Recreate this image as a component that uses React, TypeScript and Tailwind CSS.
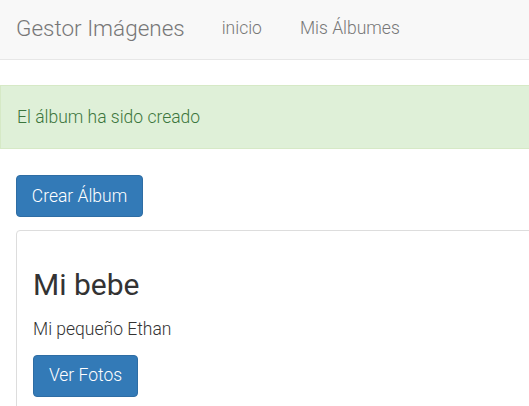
export default function App() {
  return (
    <div className="w-[529px] h-[406px] overflow-hidden bg-white" style={{ fontFamily: "Roboto, 'Noto Sans', sans-serif" }}>
      <div className="w-[700px]">
        <nav className="h-[60px] pb-[2px] bg-[#f8f8f8] border-b border-[#e7e7e7] flex items-center">
          <span className="ml-[16px] text-[22.5px] text-[#777] font-light leading-none">Gestor Imágenes</span>
          <span className="ml-[37px] text-[17.5px] text-[#777] font-light leading-none">inicio</span>
          <span className="ml-[38px] text-[17.5px] text-[#777] font-light leading-none">Mis Álbumes</span>
        </nav>
        <div className="mt-[25px] h-[64px] bg-[#dff0d8] border border-[#d6e9c6] flex items-center pl-[16px] text-[17.5px] font-light text-[#3c763d]">
          El álbum ha sido creado
        </div>
        <div className="pl-[16px]">
          <button className="mt-[26px] h-[42px] w-[127px] rounded-[4px] bg-[#337ab7] border border-[#2e6da4] text-white text-[17.5px] font-light flex items-center justify-center">
            Crear Álbum
          </button>
          <div className="mt-[13px] border border-[#ddd] rounded-[4px] pl-[16px] pt-[39px] pb-[20px]">
            <h3 className="text-[30px] leading-none text-[#333] font-normal">Mi bebe</h3>
            <p className="mt-[21px] text-[17.5px] leading-none font-light text-[#333]">Mi pequeño Ethan</p>
            <button className="mt-[16px] h-[42px] w-[105px] rounded-[4px] bg-[#337ab7] border border-[#2e6da4] text-white text-[17.5px] font-light flex items-center justify-center">
              Ver Fotos
            </button>
          </div>
        </div>
      </div>
    </div>
  );
}
